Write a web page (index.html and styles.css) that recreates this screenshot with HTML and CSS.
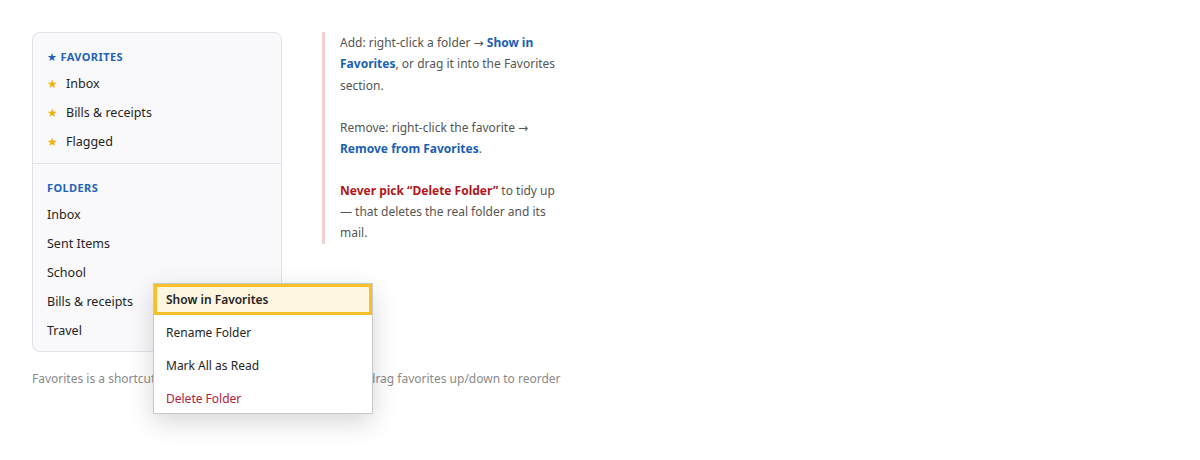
FILE: index.html
```html
<!DOCTYPE html>
<html lang="en">
<head>
<meta charset="utf-8">
<title>Favorites</title>
<link rel="stylesheet" href="styles.css">
</head>
<body>
<div class="layout">
  <div class="left">
    <div class="panel">
      <div class="section">
        <div class="head">★ Favorites</div>
        <div class="row"><span class="star">★</span>Inbox</div>
        <div class="row"><span class="star">★</span>Bills &amp; receipts</div>
        <div class="row"><span class="star">★</span>Flagged</div>
      </div>
      <div class="section second">
        <div class="head">Folders</div>
        <div class="row">Inbox</div>
        <div class="row">Sent Items</div>
        <div class="row">School</div>
        <div class="row">Bills &amp; receipts</div>
        <div class="row">Travel</div>
      </div>
    </div>
    <p class="foot">Favorites is a shortcut — the actual folder stays where it is · drag favorites up/down to reorder</p>
  </div>
  <div class="note">
    <p>Add: right-click a folder → <b class="blue">Show in Favorites</b>, or drag it into the Favorites section.</p>
    <p>Remove: right-click the favorite → <b class="blue">Remove from Favorites</b>.</p>
    <p><b class="red">Never pick “Delete Folder”</b> to tidy up — that deletes the real folder and its mail.</p>
  </div>
</div>
<div class="menu">
  <div class="mi active">Show in Favorites</div>
  <div class="mi">Rename Folder</div>
  <div class="mi">Mark All as Read</div>
  <div class="mi danger last">Delete Folder</div>
</div>
</body>
</html>
```
FILE: styles.css
```css
html, body {
  margin: 0;
  background: #ffffff;
}
body {
  padding: 32px;
  font-family: "Noto Sans", "Open Sans", "DejaVu Sans", sans-serif;
  font-size: 12.5px;
  color: #242424;
  position: relative;
  min-height: 396px;
}
.layout {
  display: flex;
  align-items: flex-start;
  gap: 40px;
}
.left {
  width: 250px;
}
.panel {
  border: 1px solid #e0e0e6;
  border-radius: 8px;
  background: #f9f9fb;
}
.section {
  padding: 17px 14px 7px;
}
.section.second {
  border-top: 1px solid #e3e3e8;
  padding-top: 17px;
  padding-bottom: 6px;
}
.head {
  height: 14px;
  line-height: 14px;
  font-size: 11px;
  font-weight: 700;
  letter-spacing: 0.4px;
  text-transform: uppercase;
  color: #1f64b8;
  margin-bottom: 5px;
}
.row {
  height: 29px;
  line-height: 29px;
  display: flex;
  align-items: center;
}
.star {
  color: #f2b105;
  font-size: 12px;
  width: 19px;
}
.foot {
  margin: 18px 0 0;
  line-height: 18px;
  font-size: 12px;
  color: #8a8a8a;
  white-space: nowrap;
}
.note {
  width: 222px;
  border-left: 3px solid #f3cfd0;
  padding-left: 15px;
  font-size: 12px;
  line-height: 21.3px;
  color: #555555;
}
.note p {
  margin: 0 0 20.7px;
}
.note p:last-child {
  margin-bottom: 0;
}
.blue {
  color: #1a5fb4;
}
.red {
  color: #b3151b;
}
.menu {
  position: absolute;
  left: 153px;
  top: 283px;
  width: 218px;
  border: 1px solid #c9c9c9;
  background: #ffffff;
  box-shadow: 0 8px 24px rgba(0, 0, 0, 0.16);
}
.mi {
  height: 33px;
  line-height: 35px;
  padding-left: 12px;
  font-size: 12px;
  color: #242424;
}
.mi.last {
  height: 32px;
  line-height: 36px;
}
.mi.active {
  height: 25px;
  line-height: 25px;
  padding-left: 9px;
  border: 3px solid #f7c02b;
  background: #fff6e0;
  font-weight: 600;
}
.mi.danger {
  color: #b3203a;
}
```
